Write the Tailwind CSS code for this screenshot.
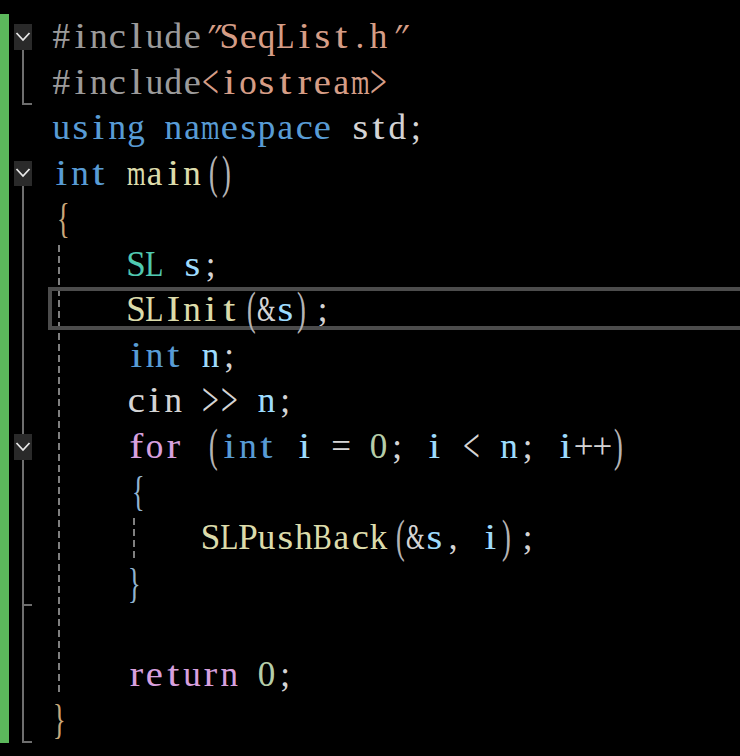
<!DOCTYPE html>
<html lang="en">
  <head>
    <meta charset="UTF-8">
    <title>SeqList test</title>
    <script src="https://cdn.jsdelivr.net/npm/@tailwindcss/browser@4"></script>
  </head>
  <body class="bg-black">
    <div class="flex w-[740px] h-[756px] overflow-hidden bg-black">
      <!-- change bar -->
      <div class="w-[9px] h-[729px] mt-[14px] shrink-0 bg-[#5cb85c]"></div>

      <!-- fold margin -->
      <div class="flex flex-col w-[18px] ml-[5px] pt-[24px] shrink-0">
        <svg class="w-[18px] h-[26px] shrink-0 bg-[#2a2a2a]" viewBox="0 0 18 26"><path d="M2.5 9l6.5 7 6.5-7" fill="none" stroke="#e8e8e8" stroke-width="1.8"/></svg>
        <div class="h-[55px] w-[10px] ml-[8px] border-l-2 border-b-2 border-[#6e6e6e]"></div>
        <div class="h-[56px]"></div>
        <svg class="w-[18px] h-[25px] shrink-0 bg-[#2a2a2a]" viewBox="0 0 18 25"><path d="M2.5 8l6.5 7 6.5-7" fill="none" stroke="#e8e8e8" stroke-width="1.8"/></svg>
        <div class="h-[248px] ml-[8px] border-l-2 border-[#6e6e6e]"></div>
        <svg class="w-[18px] h-[26px] shrink-0 bg-[#2a2a2a]" viewBox="0 0 18 26"><path d="M2.5 9l6.5 7 6.5-7" fill="none" stroke="#e8e8e8" stroke-width="1.8"/></svg>
        <div class="h-[146px] w-[10px] ml-[8px] border-l-2 border-b-2 border-[#6e6e6e]"></div>
        <div class="h-[137px] w-[10px] ml-[8px] border-l-2 border-b-2 border-[#6e6e6e]"></div>
      </div>

      <!-- code -->
      <div id="code" class="relative ml-[20px] pt-[14px] grow font-['Liberation_Serif',serif] text-[35px] leading-[45.56px] text-[#d4d4d4] [text-shadow:-0.3px_0_rgba(255,120,40,.15),0.3px_0_rgba(60,140,255,.15)]">
        <div class="absolute left-[6px] top-[245px] w-[2px] h-[450px] bg-[repeating-linear-gradient(to_bottom,#808080_0,#808080_7px,transparent_7px,transparent_11px)]"></div>
        <div class="absolute left-[81px] top-[518px] w-[2px] h-[42px] bg-[repeating-linear-gradient(to_bottom,#808080_0,#808080_7px,transparent_7px,transparent_11px)]"></div>

        <div class="h-[45.56px]"><span class="text-[#9b9b9b]">#include</span><span class="text-[#d69d85]">"SeqList.h"</span></div>
        <div class="h-[45.56px]"><span class="text-[#9b9b9b]">#include</span><span class="text-[#d69d85]">&lt;iostream&gt;</span></div>
        <div class="h-[45.56px]"><span class="text-[#569cd6]">using namespace </span><span>std;</span></div>
        <div class="h-[45.56px]"><span class="text-[#569cd6]">int </span><span class="text-[#dcdcaa]">main</span><span>()</span></div>
        <div class="h-[45.56px]"><span class="text-[#c9a878]">{</span></div>
        <div class="h-[45.56px]"><span>    </span><span class="text-[#4ec9b0]">SL </span><span class="text-[#9cdcfe]">s</span><span>;</span></div>
        <div class="relative h-[45.56px]">
          <div class="absolute left-[-4px] top-0 w-[700px] h-[43px] border-[4px] border-r-0 border-[#4c4c4c]"></div><span>    </span><span class="text-[#dcdcaa]">SLInit</span><span>(&amp;</span><span class="text-[#9cdcfe]">s</span><span>);</span></div>
        <div class="h-[45.56px]"><span>    </span><span class="text-[#569cd6]">int </span><span class="text-[#9cdcfe]">n</span><span>;</span></div>
        <div class="h-[45.56px]"><span>    </span><span>cin &gt;&gt; </span><span class="text-[#9cdcfe]">n</span><span>;</span></div>
        <div class="h-[45.56px]"><span>    </span><span class="text-[#d8a0df]">for </span><span>(</span><span class="text-[#569cd6]">int </span><span class="text-[#9cdcfe]">i</span><span> = </span><span class="text-[#b5cea8]">0</span><span>; </span><span class="text-[#9cdcfe]">i</span><span> &lt; </span><span class="text-[#9cdcfe]">n</span><span>; </span><span class="text-[#9cdcfe]">i</span><span>++)</span></div>
        <div class="h-[45.56px]"><span>    </span><span class="text-[#8fb4d0]">{</span></div>
        <div class="h-[45.56px]"><span>        </span><span class="text-[#dcdcaa]">SLPushBack</span><span>(&amp;</span><span class="text-[#9cdcfe]">s</span><span>, </span><span class="text-[#9cdcfe]">i</span><span>);</span></div>
        <div class="h-[45.56px]"><span>    </span><span class="text-[#8fb4d0]">}</span></div>
        <div class="h-[45.56px]"></div>
        <div class="h-[45.56px]"><span>    </span><span class="text-[#d8a0df]">return </span><span class="text-[#b5cea8]">0</span><span>;</span></div>
        <div class="h-[45.56px]"><span class="text-[#c9a878]">}</span></div>
      </div>
    </div>
    <script>
      // the font in the screenshot is fixed pitch with thin wide glyphs,
      // every char gets its own cell and gets pulled towards that shape
      const cell = 'inline-flex justify-center w-[18.67px] whitespace-pre';
      const glyphFix = {
        'm': 'scale-x-[0.68]',
        '&': 'scale-x-[0.68]',
        'B': 'scale-x-[0.8]',
        'L': 'scale-x-[0.85]',
        '"': '-skew-x-[30deg]',
        'i': 'scale-x-[1.2]',
        'l': 'scale-x-[1.2]',
        't': 'scale-x-[1.25]',
        'f': 'scale-x-[1.2]',
        'r': 'scale-x-[1.15]',
        's': 'scale-x-[1.15]',
        'c': 'scale-x-[1.1]',
        'e': 'scale-x-[1.1]',
        'I': 'scale-x-[1.15]',
        '(': 'scale-x-[0.75] scale-y-[1.3] translate-x-[3px] text-[#b4b4b4]',
        ')': 'scale-x-[0.75] scale-y-[1.3] -translate-x-[3px] text-[#b4b4b4]',
        '{': 'scale-x-[0.75] scale-y-[1.2] translate-x-[2px]',
        '}': 'scale-x-[0.75] scale-y-[1.2] -translate-x-[2px]',
        '<': 'scale-x-[0.85] scale-y-[1.4]',
        '>': 'scale-x-[0.85] scale-y-[1.4]'
      };
      document.querySelectorAll('#code span').forEach(token => {
        const text = token.textContent;
        token.textContent = '';
        for (const ch of text) {
          const c = document.createElement('span');
          c.className = cell + ' ' + (glyphFix[ch] || '');
          c.textContent = ch;
          token.appendChild(c);
        }
      });
    </script>
  </body>
</html>
